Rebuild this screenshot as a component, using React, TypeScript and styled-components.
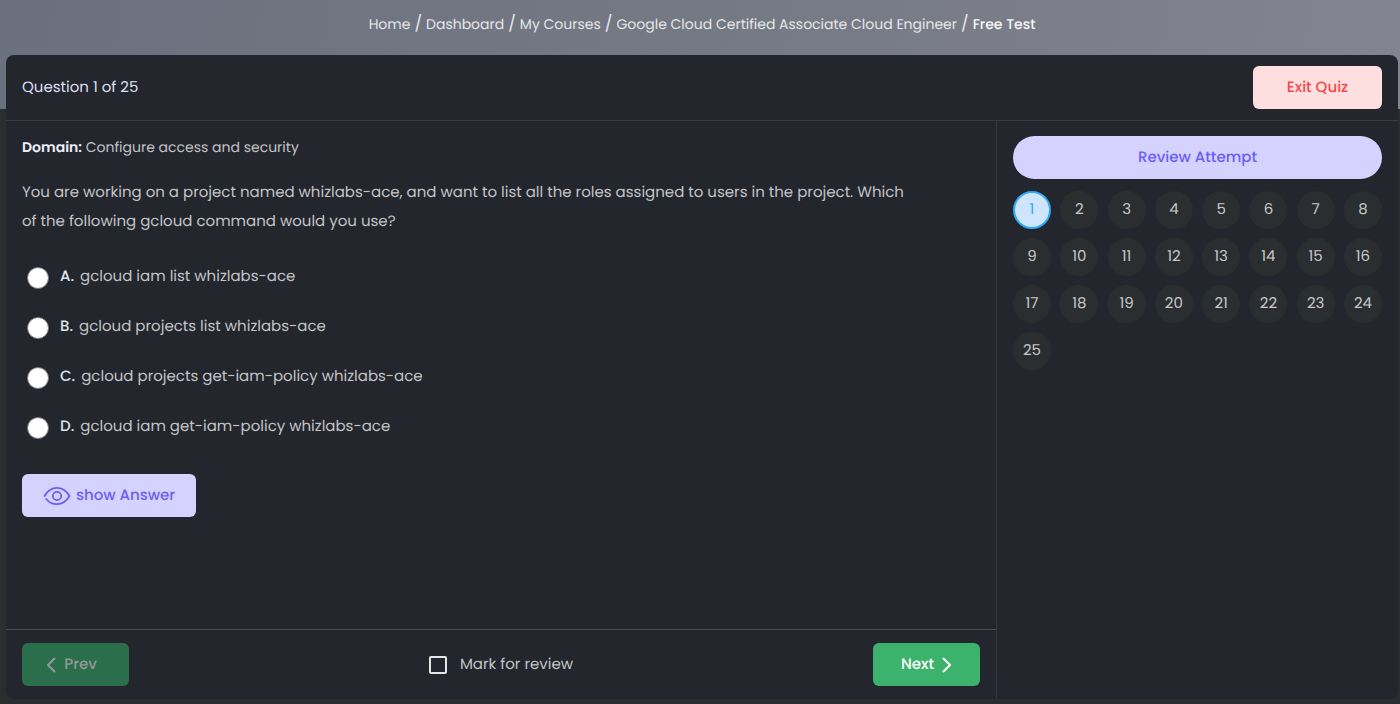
import React, { useState } from 'react';
import styled, { createGlobalStyle } from 'styled-components';

const GlobalStyle = createGlobalStyle`
  *, *::before, *::after { box-sizing: border-box; }
  body {
    margin: 0;
    background: #2b2e30;
    color: #c2c3c5;
    font-family: Poppins, Inter, sans-serif;
    font-size: 15px;
    line-height: 24px;
    text-rendering: geometricPrecision;
  }
  button, input { font: inherit; text-rendering: inherit; }
`;

const Page = styled.div`
  min-height: 100vh;
  display: flex;
  flex-direction: column;
  background: linear-gradient(100deg, #6a707e 0%, #757984 50%, #82848f 100%) top / 100% 109px no-repeat;
`;

const Breadcrumb = styled.nav`
  padding: 12px 16px 19px 20px;
  ol {
    display: flex;
    flex-wrap: wrap;
    justify-content: center;
    margin: 0;
    padding: 0;
    list-style: none;
    font-size: 14px;
  }
  li + li::before {
    content: '/';
    margin: 0 4px;
    font-size: 16px;
    line-height: 20px;
    color: #e8e8ea;
  }
`;

const Crumb = styled.a<{ $current?: boolean }>`
  color: ${(p) => (p.$current ? '#f6f6f8' : '#e4e5e8')};
  font-weight: ${(p) => (p.$current ? 500 : 400)};
  text-decoration: none;
`;

const Card = styled.main`
  flex: 1;
  display: flex;
  flex-direction: column;
  margin: 0 2px 5px 6px;
  border-radius: 8px;
  background: #23262d;
`;

const Header = styled.header`
  display: flex;
  align-items: center;
  justify-content: space-between;
  padding: 11px 16px;
  border-bottom: 1px solid #3b3c3e;
`;

const Counter = styled.h1`
  margin: 0;
  font-size: 15px;
  font-weight: 400;
  color: #dcdff0;
`;

const Button = styled.button<{ $tone: 'danger' | 'soft' | 'go'; $pill?: boolean; $width?: string }>`
  display: inline-flex;
  align-items: center;
  justify-content: center;
  width: ${(p) => p.$width ?? 'auto'};
  height: 43px;
  padding: 0;
  border: 0;
  border-radius: ${(p) => (p.$pill ? '22px' : '6px')};
  font-size: 15px;
  font-weight: 500;
  white-space: nowrap;
  cursor: pointer;
  color: ${(p) => ({ danger: '#f54a4a', soft: '#6c5ff5', go: '#ffffff' })[p.$tone]};
  background: ${(p) => ({ danger: '#fddfdf', soft: '#d6d2ff', go: '#3cb26d' })[p.$tone]};
  &:disabled {
    color: #939996;
    background: #2a6e4c;
    cursor: default;
  }
`;

const PageButton = styled(Button)`
  gap: 8px;
`;

const PrevButton = styled(PageButton)`
  padding-right: 8px;
`;

const Body = styled.div`
  flex: 1;
  display: grid;
  grid-template-columns: minmax(0, 1fr) 402px;
`;

const QuizColumn = styled.section`
  display: flex;
  flex-direction: column;
`;

const Question = styled.div`
  flex: 1;
  padding: 14px 80px 16px 16px;
`;

const Domain = styled.p`
  margin: 0 0 19px;
  font-size: 14px;
  strong { color: #eceefa; font-weight: 600; }
`;

const Prompt = styled.p`
  margin: 0 0 29px;
  line-height: 29px;
`;

const Options = styled.fieldset`
  display: flex;
  flex-direction: column;
  gap: 26px;
  margin: 0 0 35px;
  padding: 0 0 0 5px;
  border: 0;
`;

const Option = styled.label`
  display: flex;
  align-items: center;
  cursor: pointer;
  b {
    margin: 0 6px 0 11px;
    font-weight: 500;
    color: #dfe1ec;
  }
`;

const Radio = styled.input.attrs({ type: 'radio', name: 'answer' })`
  appearance: none;
  width: 22px;
  height: 22px;
  margin: 2px 0 0;
  border: 1px solid #77787b;
  border-radius: 50%;
  background: #ffffff;
  &:checked { border: 6px solid #6c5ff5; }
`;

const EyeIcon = styled.svg`
  width: 28px;
  height: 20px;
  margin-right: 5px;
  fill: none;
  stroke: currentColor;
  stroke-width: 1.8;
  stroke-linecap: round;
`;

const Chevron = styled.svg`
  width: 10px;
  height: 16px;
  fill: none;
  stroke: currentColor;
  stroke-width: 2;
  stroke-linecap: round;
  stroke-linejoin: round;
`;

const Footer = styled.footer`
  display: flex;
  align-items: center;
  justify-content: space-between;
  padding: 13px 16px;
  border-top: 1px solid #4b4d4f;
`;

const Mark = styled.label`
  display: flex;
  align-items: center;
  gap: 13px;
  cursor: pointer;
`;

const Checkbox = styled.input.attrs({ type: 'checkbox' })`
  appearance: none;
  width: 18px;
  height: 18px;
  margin: 0;
  border: 2px solid #e6e6e6;
  border-radius: 2px;
  &:checked { background: #6c5ff5; }
`;

const Sidebar = styled.aside`
  padding: 15px 16px;
  border-left: 1px solid #37393c;
`;

const Numbers = styled.div`
  display: grid;
  grid-template-columns: repeat(8, 38px);
  justify-content: space-between;
  row-gap: 9px;
  margin-top: 12px;
`;

const NumberButton = styled.button<{ $active: boolean }>`
  height: 38px;
  padding: 0;
  border: 2px solid ${(p) => (p.$active ? '#2fa8f6' : '#2b2e30')};
  border-radius: 50%;
  background: ${(p) => (p.$active ? '#cfe5fe' : '#2b2e30')};
  color: ${(p) => (p.$active ? '#2fa8f6' : '#c6c7c9')};
  cursor: pointer;
`;

const crumbs = ['Home', 'Dashboard', 'My Courses', 'Google Cloud Certified Associate Cloud Engineer', 'Free Test'];

const options = [
  ['A.', 'gcloud iam list whizlabs-ace'],
  ['B.', 'gcloud projects list whizlabs-ace'],
  ['C.', 'gcloud projects get-iam-policy whizlabs-ace'],
  ['D.', 'gcloud iam get-iam-policy whizlabs-ace'],
];

const numbers = Array.from({ length: 25 }, (_, i) => i + 1);

export default function App() {
  const [current, setCurrent] = useState(1);

  return (
    <>
      <GlobalStyle />
      <Page>
        <Breadcrumb aria-label="Breadcrumb">
          <ol>
            {crumbs.map((name, i) => (
              <li key={name}>
                <Crumb href="#" $current={i === crumbs.length - 1}>{name}</Crumb>
              </li>
            ))}
          </ol>
        </Breadcrumb>
        <Card>
          <Header>
            <Counter>Question {current} of 25</Counter>
            <Button $tone="danger" $width="129px">Exit Quiz</Button>
          </Header>
          <Body>
            <QuizColumn>
              <Question>
                <Domain><strong>Domain:</strong> Configure access and security</Domain>
                <Prompt>
                  You are working on a project named whizlabs-ace, and want to list all the roles assigned to
                  users in the project. Which of the following gcloud command would you use?
                </Prompt>
                <Options aria-label="Answers">
                  {options.map(([letter, text]) => (
                    <Option key={letter}>
                      <Radio value={letter} />
                      <b>{letter}</b>
                      <span>{text}</span>
                    </Option>
                  ))}
                </Options>
                <Button $tone="soft" $width="174px">
                  <EyeIcon viewBox="0 0 28 20" aria-hidden="true">
                    <path d="M1.5 10C4.5 4.8 8.6 1.8 14 1.8S23.5 4.8 26.5 10C23.5 15.2 19.4 18.2 14 18.2C9.5 18.2 6 16.4 3.2 13" />
                    <circle cx="14" cy="10" r="4.2" />
                  </EyeIcon>
                  show Answer
                </Button>
              </Question>
              <Footer>
                <PrevButton $tone="go" $width="107px" disabled={current === 1} onClick={() => setCurrent(current - 1)}>
                  <Chevron viewBox="0 0 10 16" aria-hidden="true"><path d="M8.5 1.5L2 8l6.5 6.5" /></Chevron>
                  Prev
                </PrevButton>
                <Mark><Checkbox /> Mark for review</Mark>
                <PageButton $tone="go" $width="107px" disabled={current === 25} onClick={() => setCurrent(current + 1)}>
                  Next
                  <Chevron viewBox="0 0 10 16" aria-hidden="true"><path d="M1.5 1.5L8 8l-6.5 6.5" /></Chevron>
                </PageButton>
              </Footer>
            </QuizColumn>
            <Sidebar>
              <Button $tone="soft" $pill $width="100%">Review Attempt</Button>
              <Numbers>
                {numbers.map((n) => (
                  <NumberButton key={n} $active={n === current} onClick={() => setCurrent(n)}>{n}</NumberButton>
                ))}
              </Numbers>
            </Sidebar>
          </Body>
        </Card>
      </Page>
    </>
  );
}
